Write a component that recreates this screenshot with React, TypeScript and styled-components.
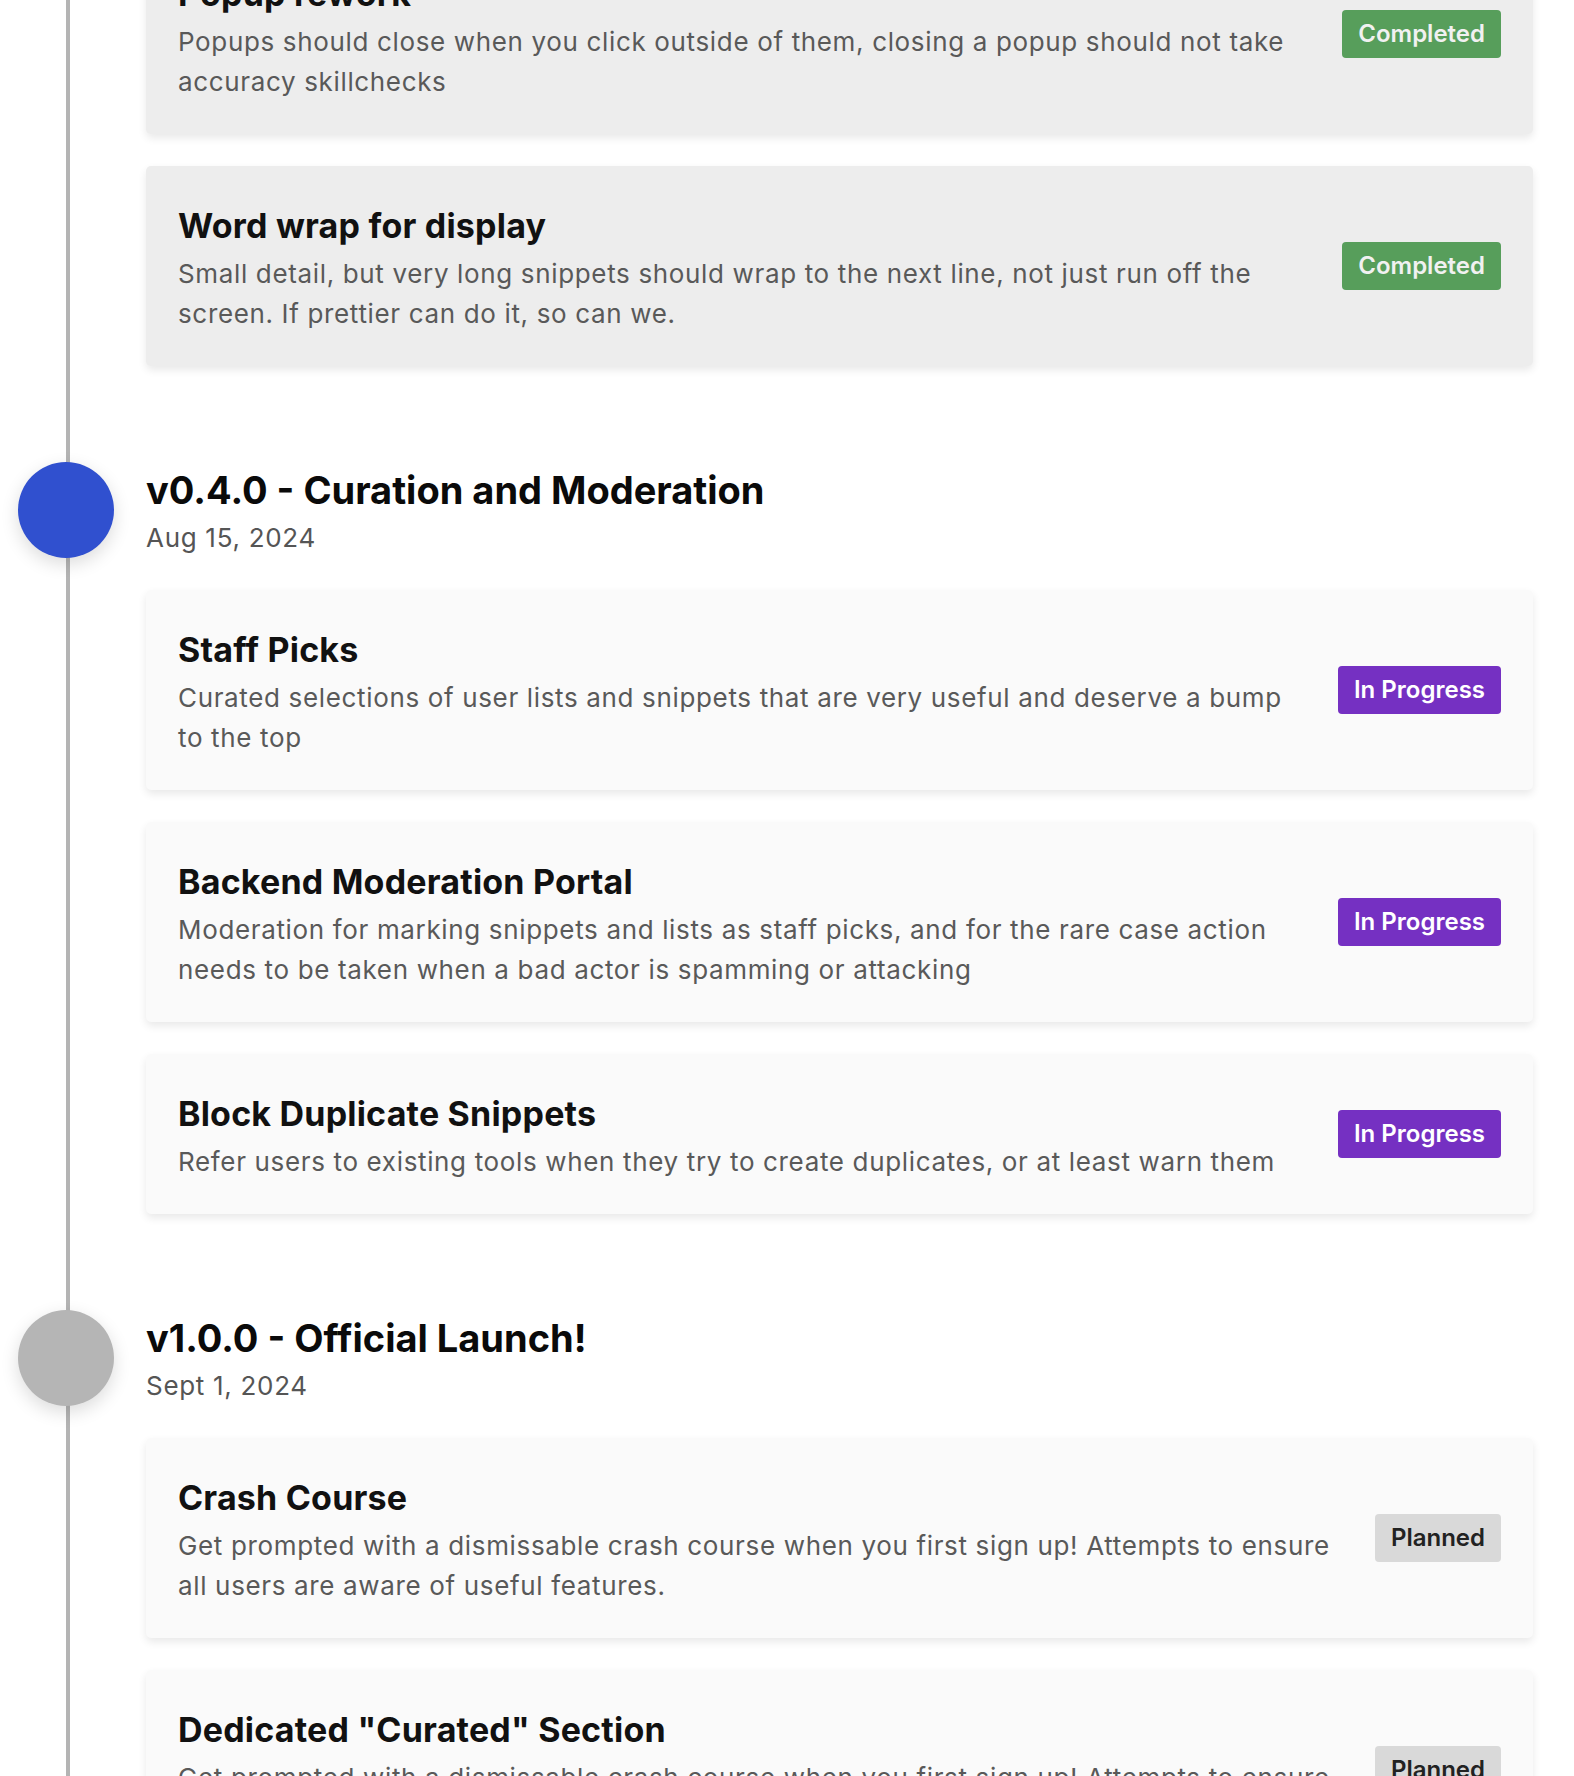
import React from "react";
import styled, { createGlobalStyle } from "styled-components";

const GlobalStyle = createGlobalStyle`
  html, body {
    margin: 0;
    padding: 0;
    background: #ffffff;
  }
  body {
    font-family: Inter, "Noto Sans", "Liberation Sans", sans-serif;
    color: #111111;
    -webkit-font-smoothing: antialiased;
  }
  * { box-sizing: border-box; }
`;

type Status = "completed" | "progress" | "planned";

const Page = styled.main`
  position: relative;
  min-height: 100vh;
  padding: 0 41px 0 0;
  overflow: hidden;

  &::before {
    content: "";
    position: absolute;
    left: 66px;
    top: 0;
    bottom: 0;
    width: 4px;
    background: #b4b4b4;
  }
`;

const Timeline = styled.div`
  position: relative;
  margin-top: -66px;
  display: flex;
  flex-direction: column;
  gap: 100px;
`;

const Section = styled.section`
  display: grid;
  grid-template-columns: 132px 1fr;
  column-gap: 14px;
  row-gap: 32px;
`;

const Header = styled.header`
  grid-column: 1 / span 2;
  display: grid;
  grid-template-columns: 132px 1fr;
  column-gap: 14px;
`;

const Dot = styled.span<{ $color: string }>`
  justify-self: center;
  align-self: end;
  width: 96px;
  height: 96px;
  margin-top: -4px;
  border-radius: 50%;
  background: ${(p) => p.$color};
  box-shadow: 0 6px 18px rgba(0, 0, 0, 0.14);
`;

const HeaderText = styled.div`
  display: flex;
  flex-direction: column;
  gap: 4px;
`;

const Version = styled.h2`
  margin: 0;
  font-size: 38px;
  line-height: 48px;
  font-weight: 700;
  color: #0a0a0a;
`;

const DateText = styled.div`
  font-size: 26px;
  line-height: 40px;
  letter-spacing: 0.7px;
  color: #555555;
`;

const CardList = styled.div`
  grid-column: 2;
  display: flex;
  flex-direction: column;
  gap: 32px;
`;

const Card = styled.article<{ $done: boolean }>`
  display: flex;
  align-items: center;
  gap: 32px;
  padding: 32px;
  border-radius: 5px;
  background: ${(p) => (p.$done ? "#ededed" : "#fafafa")};
  box-shadow: 0 4px 8px rgba(0, 0, 0, 0.09);
`;

const CardBody = styled.div`
  flex: 1;
  min-width: 0;
`;

const CardTitle = styled.h3`
  margin: 8px 0;
  font-size: 34px;
  line-height: 40px;
  font-weight: 700;
  letter-spacing: 0.2px;
  color: #111111;
`;

const CardText = styled.p`
  margin: 0;
  font-size: 26px;
  line-height: 40px;
  letter-spacing: 0.65px;
  color: #595959;
`;

const badgeColors: Record<Status, { bg: string; fg: string }> = {
  completed: { bg: "#579e5b", fg: "#f1f1f1" },
  progress: { bg: "#7530c2", fg: "#ffffff" },
  planned: { bg: "#d9d9d9", fg: "#222222" },
};

const badgeLabels: Record<Status, string> = {
  completed: "Completed",
  progress: "In Progress",
  planned: "Planned",
};

const Badge = styled.span<{ $status: Status }>`
  flex-shrink: 0;
  padding: 8px 16px;
  border-radius: 4px;
  font-size: 24px;
  line-height: 32px;
  font-weight: 600;
  white-space: nowrap;
  background: ${(p) => badgeColors[p.$status].bg};
  color: ${(p) => badgeColors[p.$status].fg};
`;

type Item = { title: string; text: string; status: Status };
type Release = { version?: string; date?: string; dot?: string; items: Item[] };

const crash =
  "Get prompted with a dismissable crash course when you first sign up! Attempts to ensure all users are aware of useful features.";

const releases: Release[] = [
  {
    items: [
      {
        title: "Popup rework",
        text: "Popups should close when you click outside of them, closing a popup should not take accuracy skillchecks",
        status: "completed",
      },
      {
        title: "Word wrap for display",
        text: "Small detail, but very long snippets should wrap to the next line, not just run off the screen. If prettier can do it, so can we.",
        status: "completed",
      },
    ],
  },
  {
    version: "v0.4.0 - Curation and Moderation",
    date: "Aug 15, 2024",
    dot: "#3050cf",
    items: [
      {
        title: "Staff Picks",
        text: "Curated selections of user lists and snippets that are very useful and deserve a bump to the top",
        status: "progress",
      },
      {
        title: "Backend Moderation Portal",
        text: "Moderation for marking snippets and lists as staff picks, and for the rare case action needs to be taken when a bad actor is spamming or attacking",
        status: "progress",
      },
      {
        title: "Block Duplicate Snippets",
        text: "Refer users to existing tools when they try to create duplicates, or at least warn them",
        status: "progress",
      },
    ],
  },
  {
    version: "v1.0.0 - Official Launch!",
    date: "Sept 1, 2024",
    dot: "#b5b5b5",
    items: [
      { title: "Crash Course", text: crash, status: "planned" },
      { title: 'Dedicated "Curated" Section', text: crash, status: "planned" },
    ],
  },
];

export default function App() {
  return (
    <>
      <GlobalStyle />
      <Page>
        <Timeline>
          {releases.map((r, i) => (
            <Section key={i}>
              {r.version && (
                <Header>
                  <Dot $color={r.dot || "#b5b5b5"} />
                  <HeaderText>
                    <Version>{r.version}</Version>
                    <DateText>{r.date}</DateText>
                  </HeaderText>
                </Header>
              )}
              <CardList>
                {r.items.map((it) => (
                  <Card key={it.title} $done={it.status === "completed"}>
                    <CardBody>
                      <CardTitle>{it.title}</CardTitle>
                      <CardText>{it.text}</CardText>
                    </CardBody>
                    <Badge $status={it.status}>{badgeLabels[it.status]}</Badge>
                  </Card>
                ))}
              </CardList>
            </Section>
          ))}
        </Timeline>
      </Page>
    </>
  );
}
